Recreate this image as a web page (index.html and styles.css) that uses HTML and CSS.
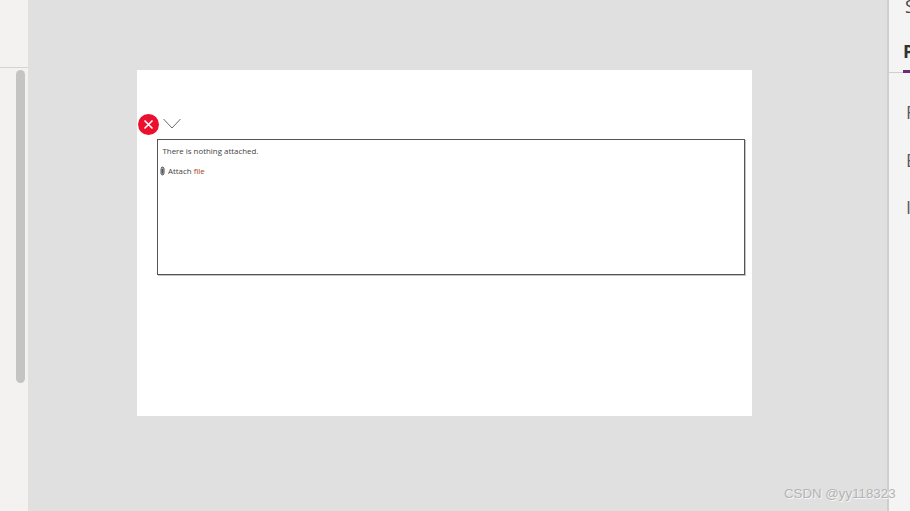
FILE: index.html
```html
<!DOCTYPE html>
<html lang="en">
  <head>
    <meta charset="UTF-8" />
    <title>attachment control</title>
    <link rel="stylesheet" href="styles.css">
  </head>
  <body>
    <div class="sidebar">
      <div class="sidebarTop"></div>
      <div class="scrollTrack">
        <span class="scrollThumb"></span>
      </div>
    </div>
    <div class="stage">
      <div class="canvas">
        <div class="errorRow">
          <svg class="errorIcon" width="21" height="21" viewBox="0 0 21 21">
            <circle cx="10.5" cy="10.5" r="10.5" fill="#ed0f2e" />
            <path d="M6.5 6.5 14.5 14.5M14.5 6.5 6.5 14.5" stroke="#fff" stroke-width="1.6" fill="none" />
          </svg>
          <svg class="chevron" width="18" height="11" viewBox="0 0 18 11">
            <path d="M.5 1 9 10 17.5 1" stroke="#6a6a6a" stroke-width="1" fill="none" />
          </svg>
        </div>
        <div class="attachBox">
          <p class="emptyText">There is nothing attached.</p>
          <div class="attachLink">
            <svg class="clip" width="5" height="10" viewBox="0 0 5 10">
              <path d="M1 2.5C1 .6 4 .6 4 2.5V7.5C4 9.4 1 9.4 1 7.5V3M2.5 3V7.5" stroke="#555" stroke-width="1" fill="#aaa" />
            </svg>
            <span>Attach <em class="fileWord">file</em></span>
          </div>
        </div>
      </div>
    </div>
    <div class="panel">
      <div class="panelTitle">S</div>
      <div class="tabs">
        <span class="tabActive">P</span>
      </div>
      <ul class="props">
        <li>F</li>
        <li>E</li>
        <li>I</li>
      </ul>
    </div>
    <div class="watermark">CSDN @yy118323</div>
  </body>
</html>
```

FILE: styles.css
```css
* {
  box-sizing: border-box;
}
html,
body {
  height: 100%;
}
body {
  margin: 0;
  display: flex;
  overflow: hidden;
  background: #e0e0e0;
  font-family: "Open Sans", "Liberation Sans", sans-serif;
}
.sidebar {
  width: 28px;
  flex: none;
  background: #f3f2f1;
}
.sidebarTop {
  height: 68px;
  border-bottom: 1px solid #d5d4d2;
}
.scrollTrack {
  padding: 2px 0 0 16px;
}
.scrollThumb {
  display: block;
  width: 9px;
  height: 313px;
  background: #c4c4c2;
  border-radius: 5px;
}
.stage {
  flex: 1;
  min-width: 0;
  padding: 70px 0 0 109px;
}
.canvas {
  width: 615px;
  height: 346px;
  padding-top: 44px;
  background: #fff;
}
.errorRow {
  display: flex;
  align-items: center;
  gap: 5px;
  height: 21px;
  padding-left: 1px;
}
.chevron {
  display: block;
  margin: -2px 0 0 -1px;
}
.errorIcon {
  display: block;
}
.attachBox {
  width: 588px;
  height: 136px;
  margin: 4px 0 0 20px;
  padding: 5px 0 0 4.5px;
  border: 1px solid #555;
  box-shadow: 1px 1px 0 #c4c4c4;
  font-size: 7.9px;
  line-height: 12px;
  color: #444;
}
.emptyText {
  margin: 0;
}
.attachLink {
  display: flex;
  align-items: center;
  gap: 3.5px;
  margin: 8px 0 0 -3px;
}
.clip {
  display: block;
}
.fileWord {
  font-style: normal;
  color: #a8430f;
}
.panel {
  width: 23px;
  flex: none;
  overflow: hidden;
  background: #f4f4f4;
  border-left: 2px solid #cfcfcf;
  color: #333;
}
.panelTitle {
  height: 13px;
  padding-left: 16px;
  margin-top: -4px;
  font-size: 18px;
  line-height: 20px;
  color: #444;
}
.tabs {
  height: 64px;
  padding: 34px 0 0 14px;
  border-bottom: 1px solid #cfcfcf;
  white-space: nowrap;
}
.tabActive {
  display: block;
  height: 30px;
  width: 30px;
  font-size: 18px;
  line-height: 17px;
  font-weight: 700;
  border-bottom: 3px solid #742774;
}
.props {
  list-style: none;
  margin: 0;
  padding: 28px 0 0 17px;
  font-size: 18px;
  line-height: 22px;
  color: #5a5a5a;
}
.props li {
  margin-bottom: 25.5px;
}
.watermark {
  position: absolute;
  left: 784px;
  top: 486px;
  font-family: "Liberation Sans", sans-serif;
  font-size: 13.3px;
  line-height: 16px;
  color: #b4b4b4;
  text-shadow: 1px 1px 0 #f6f6f6;
  white-space: nowrap;
}
```
